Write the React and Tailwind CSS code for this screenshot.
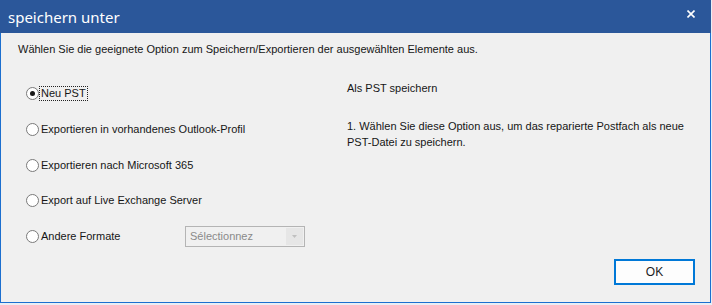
import React from "react";

function Radio({ checked, label, focus }) {
  return (
    <div className="flex items-center h-[14px]">
      <div className="w-[13px] h-[13px] rounded-full border border-[#7a7a7a] bg-white flex items-center justify-center shrink-0">
        {checked && <div className="w-[5px] h-[5px] rounded-full bg-[#1a1a1a]" />}
      </div>
      <span
        className={
          "ml-[1px] px-[1px] leading-[13px] " +
          (focus ? "outline outline-1 outline-dotted outline-[#222]" : "")
        }
      >
        {label}
      </span>
    </div>
  );
}

export default function App() {
  return (
    <div
      className="w-[712px] h-[305px] bg-[#e9eef5] relative overflow-hidden"
      style={{ fontFamily: '"Liberation Sans", Arial, sans-serif' }}
    >
      <div className="w-[711px] h-[303px] border border-[#1c6fcf] border-t-0 bg-[#f0f0f0] flex flex-col">
        <div className="h-[33px] bg-[#2b579a] flex items-start justify-between -ml-[1px] -mr-[1px]">
          <div
            className="text-white text-[15px] leading-none pl-[8px] pt-[10px]"
            style={{ fontFamily: '"Noto Sans", "Open Sans", sans-serif' }}
          >
            speichern unter
          </div>
          <svg width="8" height="8" viewBox="0 0 8 8" className="mt-[10px] mr-[16px]">
            <path d="M0.5 0.5 L7.5 7.5 M7.5 0.5 L0.5 7.5" stroke="white" strokeWidth="1.6" />
          </svg>
        </div>
        <div className="flex-1 flex flex-col text-[11px] text-[#161616] relative">
          <div className="pl-[17px] pt-[10px] leading-[13px]">
            Wählen Sie die geeignete Option zum Speichern/Exportieren der ausgewählten Elemente aus.
          </div>
          <div className="flex mt-[19px]">
            <div className="pl-[25px] w-[346px] flex flex-col">
              <div className="h-[36px] flex items-center">
                <Radio checked focus label="Neu PST" />
              </div>
              <div className="h-[36px] flex items-center">
                <Radio label="Exportieren in vorhandenes Outlook-Profil" />
              </div>
              <div className="h-[36px] flex items-center">
                <Radio label="Exportieren nach Microsoft 365" />
              </div>
              <div className="h-[35px] flex items-center">
                <Radio label="Export auf Live Exchange Server" />
              </div>
              <div className="h-[36px] flex items-center">
                <div className="w-[159px]">
                  <Radio label="Andere Formate" />
                </div>
                <div className="w-[120px] h-[21px] border border-[#b4b4b4] bg-[#f0f0f0] flex items-center">
                  <span className="pl-[4px] text-[#8a8a8a] flex-1 text-[11px]">Sélectionnez</span>
                  <div className="w-[17px] h-[17px] bg-[#e6e6e6] flex items-center justify-center mr-[1px]">
                    <svg width="5" height="3" viewBox="0 0 5 3">
                      <path d="M0 0 L5 0 L2.5 3 Z" fill="#c0c0c0" />
                    </svg>
                  </div>
                </div>
              </div>
            </div>
            <div className="flex flex-col pt-[5px] leading-[16px]">
              <div>Als PST speichern</div>
              <div className="mt-[22px] w-[340px]">
                1. Wählen Sie diese Option aus, um das reparierte Postfach als neue PST-Datei zu speichern.
              </div>
            </div>
          </div>
          <div className="flex justify-end mt-auto mb-[17px] mr-[15px]">
            <div className="w-[81px] h-[26px] border-2 border-[#0078d7] bg-[#fdfdfd] flex items-center justify-center text-[12px] text-[#1e1e1e]">
              OK
            </div>
          </div>
        </div>
      </div>
    </div>
  );
}
